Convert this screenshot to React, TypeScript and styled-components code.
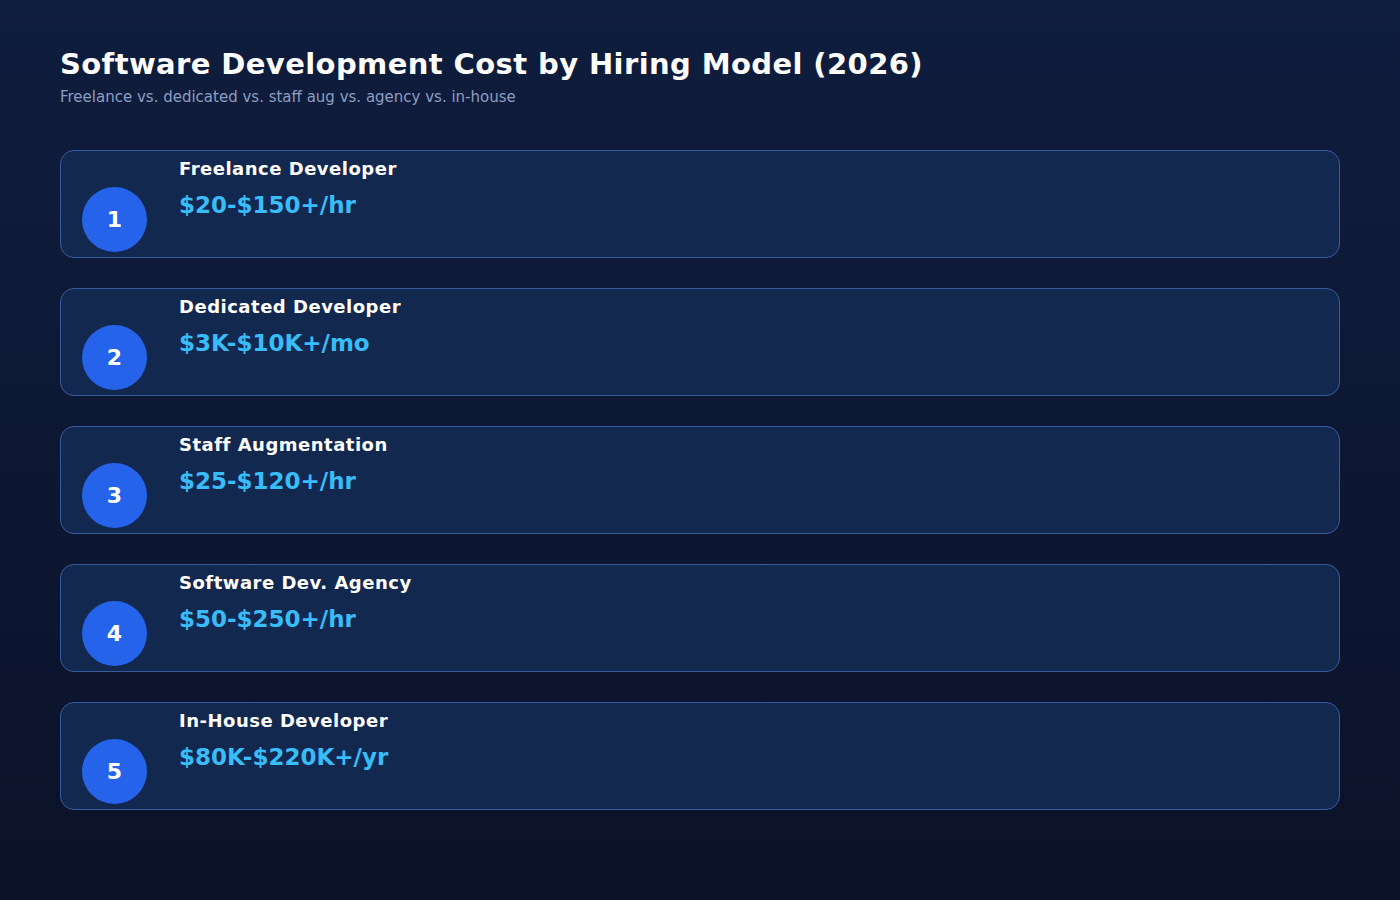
import React from "react";
import styled, { createGlobalStyle } from "styled-components";

const GlobalStyle = createGlobalStyle`
  html, body { margin: 0; padding: 0; }
  body {
    width: 1400px;
    height: 900px;
    background: linear-gradient(180deg, #0f1d3e 0%, #0b1229 100%);
    font-family: "DejaVu Sans", sans-serif;
    overflow: hidden;
  }
`;

const models = [
  { name: "Freelance Developer", price: "$20-$150+/hr" },
  { name: "Dedicated Developer", price: "$3K-$10K+/mo" },
  { name: "Staff Augmentation", price: "$25-$120+/hr" },
  { name: "Software Dev. Agency", price: "$50-$250+/hr" },
  { name: "In-House Developer", price: "$80K-$220K+/yr" },
];

const Page = styled.div`
  padding: 46px 60px 0;
`;

const Title = styled.h1`
  margin: 0;
  font-size: 29px;
  font-weight: bold;
  color: #ffffff;
  letter-spacing: 0.4px;
  line-height: 36px;
`;

const Subtitle = styled.p`
  margin: 6px 0 0;
  font-size: 15px;
  color: #8d9dc0;
  line-height: 18px;
`;

const List = styled.div`
  margin-top: 44px;
  display: flex;
  flex-direction: column;
  gap: 30px;
`;

const Card = styled.div`
  height: 108px;
  box-sizing: border-box;
  background: #13284f;
  border: 1px solid #3a5a9f;
  border-radius: 14px;
  display: grid;
  grid-template-columns: 97px 1fr;
  padding: 6px 0 0 21px;
`;

const Badge = styled.div`
  width: 65px;
  height: 65px;
  border-radius: 50%;
  background: #2563eb;
  color: #ffffff;
  font-size: 22px;
  font-weight: bold;
  display: flex;
  align-items: center;
  justify-content: center;
  margin-top: 30px;
`;

const Name = styled.div`
  font-size: 18px;
  font-weight: bold;
  color: #ffffff;
  letter-spacing: 0.5px;
  line-height: 24px;
`;

const Price = styled.div`
  margin-top: 10px;
  font-size: 23px;
  font-weight: bold;
  color: #38bdf8;
  line-height: 28px;
`;

export default function App() {
  return (
    <>
      <GlobalStyle />
      <Page>
        <Title>Software Development Cost by Hiring Model (2026)</Title>
        <Subtitle>Freelance vs. dedicated vs. staff aug vs. agency vs. in-house</Subtitle>
        <List>
          {models.map((m, i) => (
            <Card key={m.name}>
              <Badge>{i + 1}</Badge>
              <div>
                <Name>{m.name}</Name>
                <Price>{m.price}</Price>
              </div>
            </Card>
          ))}
        </List>
      </Page>
    </>
  );
}
